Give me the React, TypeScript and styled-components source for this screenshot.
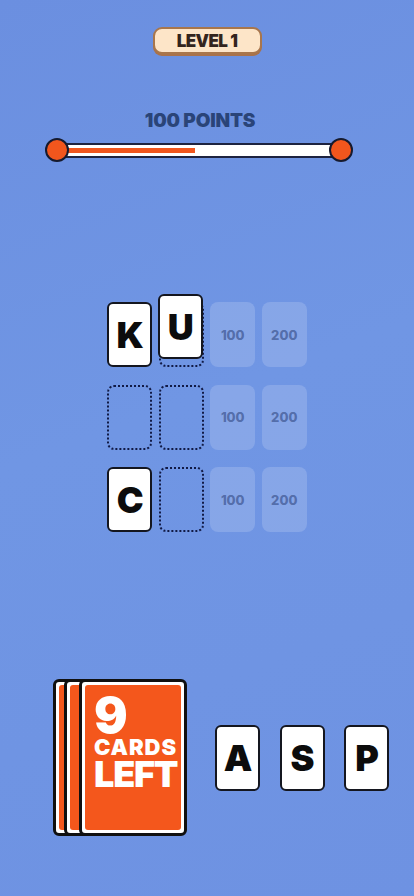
import React from "react";
import styled, { createGlobalStyle } from "styled-components";

const GlobalStyle = createGlobalStyle`
  html, body {
    margin: 0;
    padding: 0;
    background: #6e92e2;
  }
  * { box-sizing: border-box; }
`;

const Page = styled.div`
  width: 414px;
  height: 896px;
  overflow: hidden;
  background: linear-gradient(160deg, #6b8fe0 0%, #7096e4 45%, #6e92e2 100%);
  display: flex;
  flex-direction: column;
  align-items: center;
  padding-top: 27px;
  font-family: Inter, "Noto Sans", sans-serif;
`;

const LevelBadge = styled.div`
  width: 109px;
  height: 27px;
  border-radius: 9px;
  border: 2px solid #a8764c;
  background: #fde5c8;
  box-shadow: 0 2px 0 #a9724a;
  display: flex;
  align-items: center;
  justify-content: center;
  font-weight: 900;
  font-size: 17px;
  letter-spacing: -0.6px;
  color: #33241d;
`;

const PointsLabel = styled.div`
  margin-top: 56px;
  margin-right: 14px;
  height: 22px;
  line-height: 22px;
  font-size: 19px;
  font-weight: 900;
  color: #2a4478;
  letter-spacing: -0.2px;
`;

const Bar = styled.div`
  margin-top: 6px;
  margin-right: 16px;
  width: 308px;
  height: 24px;
  display: flex;
  align-items: center;
  position: relative;
`;

const Track = styled.div`
  flex: 1;
  margin: 0 12px;
  height: 15px;
  background: #ffffff;
  border-top: 2px solid #1d2340;
  border-bottom: 2px solid #1d2340;
  display: flex;
  align-items: center;
`;

const Fill = styled.div`
  height: 5px;
  background: #f0561e;
`;

const Knob = styled.div<{ $side: "left" | "right" }>`
  position: absolute;
  top: 0;
  ${(p) => (p.$side === "left" ? "left: 0;" : "right: 0;")}
  width: 24px;
  height: 24px;
  border-radius: 50%;
  background: #f2561d;
  border: 2px solid #161a2e;
`;

const Board = styled.div`
  margin-top: 140px;
  display: grid;
  grid-template-columns: repeat(4, 45px);
  grid-auto-rows: 65px;
  column-gap: 6.5px;
  row-gap: 17.5px;
`;

const Slot = styled.div`
  position: relative;
  border: 2px dotted #111a45;
  border-radius: 7px;
`;

const LetterCard = styled.div`
  width: 45px;
  height: 66px;
  background: #ffffff;
  border: 2px solid #14161f;
  border-radius: 6px;
  display: flex;
  align-items: center;
  justify-content: center;
  font-family: Inter, "Noto Sans", sans-serif;
  font-weight: 900;
  font-size: 36px;
  color: #0c0c0c;
  letter-spacing: -1px;
`;

const PlacedCard = styled(LetterCard)<{ $lift?: boolean }>`
  position: absolute;
  left: ${(p) => (p.$lift ? "-3px" : "-2px")};
  top: ${(p) => (p.$lift ? "-10px" : "-2px")};
  height: 65px;
`;

const ScoreCell = styled.div`
  border-radius: 8px;
  background: rgba(255, 255, 255, 0.16);
  display: flex;
  align-items: center;
  justify-content: center;
  font-size: 13px;
  font-weight: 800;
  color: rgba(50, 72, 130, 0.62);
`;

const BottomRow = styled.div`
  margin-top: 147px;
  width: 336px;
  margin-left: 28px;
  display: flex;
  align-items: center;
`;

const Deck = styled.div`
  position: relative;
  width: 134px;
  height: 157px;
  flex-shrink: 0;
`;

const DeckCard = styled.div<{ $offset: number }>`
  position: absolute;
  top: 0;
  left: ${(p) => p.$offset}px;
  width: 108px;
  height: 157px;
  background: #ffffff;
  border: 3px solid #101010;
  border-radius: 6px;
  padding: 3px;
`;

const DeckFace = styled.div`
  width: 100%;
  height: 100%;
  background: #f4571c;
  border-radius: 3px;
  padding: 8px 0 0 9px;
  display: flex;
  flex-direction: column;
  color: #ffffff;
  font-weight: 900;
`;

const DeckCount = styled.div`
  font-size: 50px;
  line-height: 44px;
  letter-spacing: -1px;
`;

const DeckWord = styled.div<{ $size: number; $line: number; $spacing: number }>`
  font-size: ${(p) => p.$size}px;
  line-height: ${(p) => p.$line}px;
  letter-spacing: ${(p) => p.$spacing}px;
  white-space: nowrap;
`;

const Hand = styled.div`
  margin-left: 28px;
  display: flex;
  gap: 19.5px;
`;

const rows: string[][] = [
  ["K", "U"],
  ["empty", "empty"],
  ["C", "empty"],
];

export default function App() {
  const progress = 0.486;
  return (
    <>
      <GlobalStyle />
      <Page>
        <LevelBadge>LEVEL 1</LevelBadge>
        <PointsLabel>100 POINTS</PointsLabel>
        <Bar>
          <Track>
            <Fill style={{ width: `${progress * 100}%` }} />
          </Track>
          <Knob $side="left" />
          <Knob $side="right" />
        </Bar>

        <Board>
          {rows.map((row, ri) => (
            <React.Fragment key={ri}>
              {row.map((cell, ci) =>
                cell === "empty" ? (
                  <Slot key={ci} />
                ) : ri === 0 && ci === 1 ? (
                  <Slot key={ci}>
                    <PlacedCard $lift>{cell}</PlacedCard>
                  </Slot>
                ) : (
                  <LetterCard key={ci} style={{ height: 65 }}>
                    {cell}
                  </LetterCard>
                )
              )}
              <ScoreCell>100</ScoreCell>
              <ScoreCell>200</ScoreCell>
            </React.Fragment>
          ))}
        </Board>

        <BottomRow>
          <Deck>
            <DeckCard $offset={0}>
              <DeckFace />
            </DeckCard>
            <DeckCard $offset={11}>
              <DeckFace />
            </DeckCard>
            <DeckCard $offset={26}>
              <DeckFace>
                <DeckCount>9</DeckCount>
                <DeckWord $size={22} $line={20} $spacing={0.9}>
                  CARDS
                </DeckWord>
                <DeckWord $size={36} $line={34} $spacing={-1.2}>
                  LEFT
                </DeckWord>
              </DeckFace>
            </DeckCard>
          </Deck>
          <Hand>
            <LetterCard>A</LetterCard>
            <LetterCard>S</LetterCard>
            <LetterCard>P</LetterCard>
          </Hand>
        </BottomRow>
      </Page>
    </>
  );
}
